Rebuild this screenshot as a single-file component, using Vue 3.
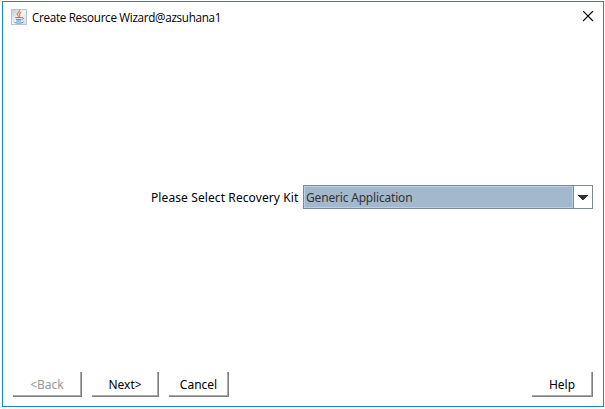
<script setup>
import { ref } from 'vue'

const title = 'Create Resource Wizard@azsuhana1'
const kit = ref('Generic Application')
</script>

<template>
  <main class="window">
    <header class="titlebar">
      <svg class="java" width="16" height="16" viewBox="0 0 16 16" aria-hidden="true">
        <defs>
          <linearGradient id="tile" x1="0" y1="0" x2="1" y2="1">
            <stop offset="0" stop-color="#b9c8d6" />
            <stop offset=".5" stop-color="#f4f6f8" />
            <stop offset="1" stop-color="#d3dae1" />
          </linearGradient>
        </defs>
        <rect x=".5" y=".5" width="15" height="15" fill="url(#tile)" stroke="#b8c4ce" />
        <path d="M8.6 1C9.4 3.2 5.4 3.8 6.2 5.5C6.6 6.4 7.5 6.6 7.5 7.8M10.3 3.4C8 4.4 8 5.2 8.7 6C9.2 6.7 8.7 7.4 8.2 7.8" fill="none" stroke="#e8834a" stroke-width="1.2" />
        <path d="M4.2 8.5H10.7M4.8 10.4H10.2M5.4 12H9.7M10.8 8.6C13.2 8.2 12.8 10.2 10.7 10.8M3 12.8C3.6 14.5 11.2 14.5 12.6 12.9" fill="none" stroke="#5f87aa" stroke-width="1" />
      </svg>
      <h1 class="title"><span>{{ title }}</span></h1>
      <svg class="close" width="11" height="11" viewBox="0 0 11 11" aria-label="Close">
        <path d="M0 0L10 10M10 0L0 10" stroke="#000" stroke-width="1.15" />
      </svg>
    </header>

    <section class="content">
      <span class="label">Please Select Recovery Kit</span>
      <div class="combo">
        <span class="value">{{ kit }}</span>
        <span class="arrow">
          <svg width="10" height="5" viewBox="0 0 10 5" shape-rendering="crispEdges" aria-hidden="true">
            <path d="M0 0H10V1H9V2H8V3H7V4H6V5H4V4H3V3H2V2H1V1H0Z" fill="#333" />
          </svg>
        </span>
      </div>
    </section>

    <footer class="actions">
      <button class="btn back" disabled><span>&lt;Back</span></button>
      <button class="btn next"><span>Next&gt;</span></button>
      <button class="btn cancel"><span>Cancel</span></button>
      <button class="btn help"><span>Help</span></button>
    </footer>
  </main>
</template>

<style>
body {
  background: #fff;
}
</style>

<style scoped>
.window {
  box-sizing: border-box;
  width: 602px;
  height: 406px;
  margin: 1px 0 0 2px;
  border: 1px solid #1883d7;
  display: flex;
  flex-direction: column;
  background: #fff;
  color: #000;
  font-family: "Noto Sans", "Open Sans", sans-serif;
  font-size: 12px;
  white-space: nowrap;
}
.window * {
  box-sizing: border-box;
}
.titlebar {
  height: 30px;
  display: flex;
  align-items: flex-start;
  padding: 7px 9px 0 8px;
}
.title {
  margin: 0 auto 0 5px;
  font: 400 11.7px/16px "Open Sans", "Noto Sans", sans-serif;
  letter-spacing: -0.32px;
}
.close {
  margin-top: 2px;
}
.content {
  flex: 1;
  display: flex;
  align-items: flex-start;
  padding: 153px 9px 0 148px;
}
.label {
  width: 152px;
  line-height: 26px;
  letter-spacing: 0.1px;
}
.combo {
  width: 290px;
  height: 24px;
  display: flex;
  border: 1px solid #7a8a99;
}
.value {
  flex: 1;
  border: 1px solid #b8cfe5;
  background: #a3b8cc;
  color: #333;
  padding-left: 1px;
  line-height: 21px;
  letter-spacing: -0.18px;
}
.arrow {
  width: 19px;
  border-left: 1px solid #7a8a99;
  display: flex;
  align-items: flex-start;
  padding: 9px 0 0 4px;
}
.actions {
  height: 34px;
  display: flex;
  align-items: flex-start;
  padding: 0 10px 0 10px;
}
.btn {
  height: 25px;
  padding: 0;
  border: 0;
  border-right: 1px solid #808080;
  border-bottom: 1px solid #808080;
  box-shadow: inset -1px -1px #a9a9a9;
  background: #fff;
  color: #000;
  font: 12px/25px "Noto Sans", sans-serif;
}
.back {
  width: 69px;
  color: #999;
}
.next {
  width: 67px;
  margin-left: 10px;
}
.cancel {
  width: 60px;
  margin-left: 10px;
}
.help {
  width: 61px;
  margin-left: auto;
}
</style>
